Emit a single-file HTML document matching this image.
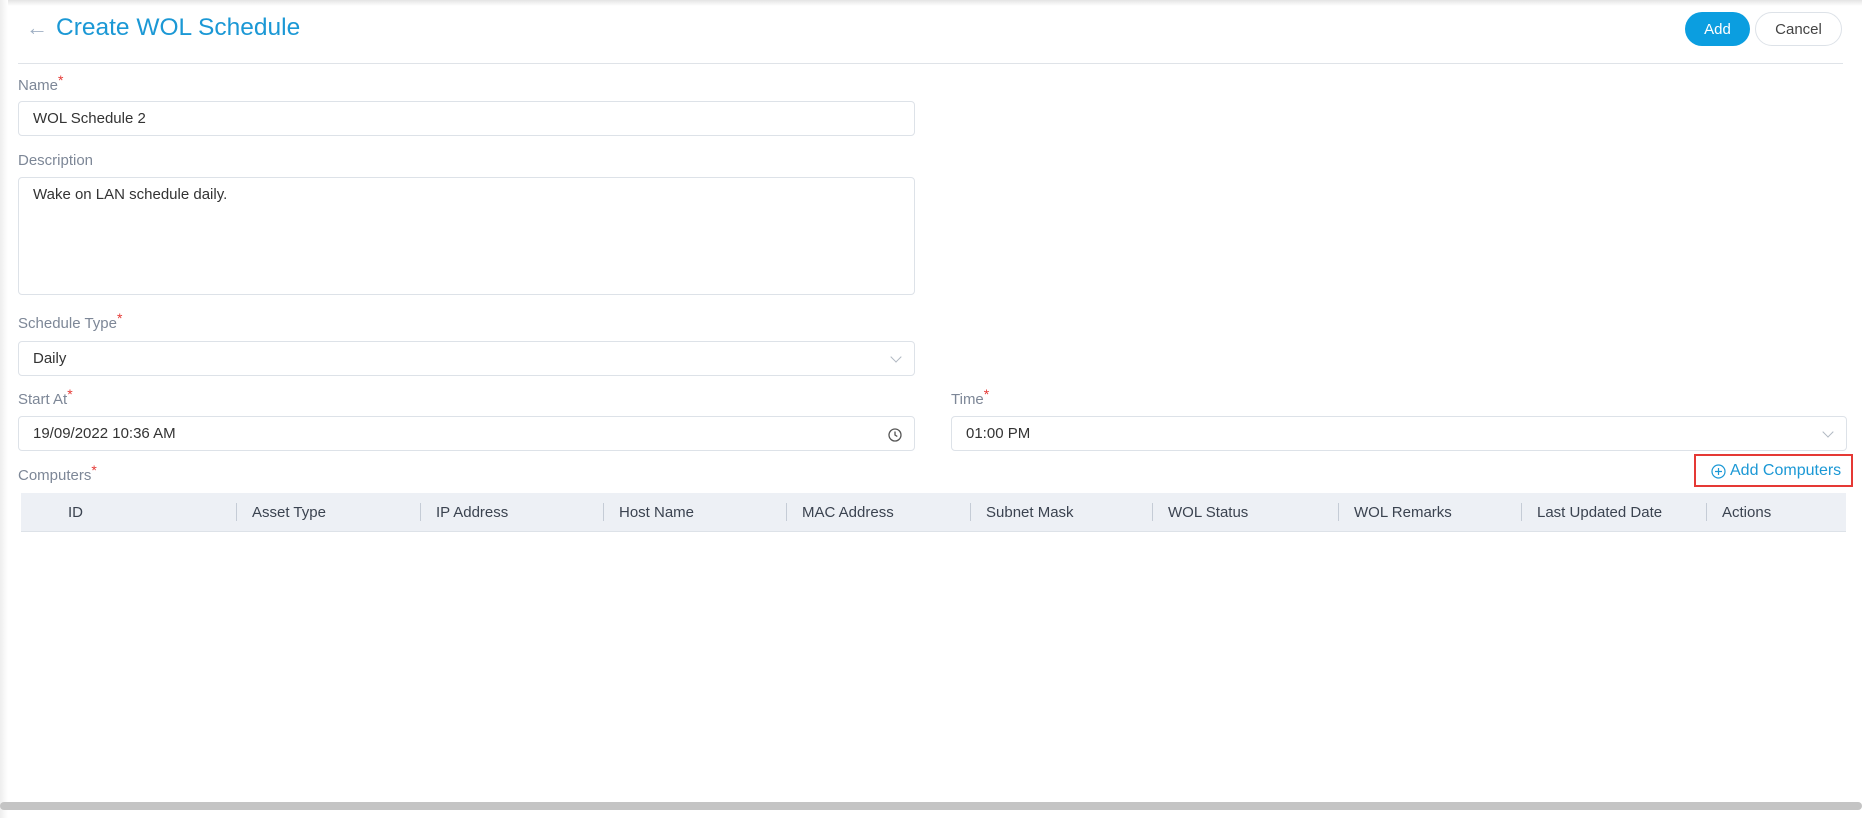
<!DOCTYPE html>
<html><head><meta charset="utf-8"><style>
*{box-sizing:border-box;margin:0;padding:0}
body{width:1862px;height:818px;overflow:hidden;background:#fff;font-family:"Liberation Sans",sans-serif;position:relative}
.shadowtop{position:absolute;left:0;top:0;width:1862px;height:6px;background:linear-gradient(#e4e4e4,#fff)}
.shadowleft{position:absolute;left:0;top:0;width:8px;height:818px;background:linear-gradient(90deg,#eeeeee,#fff)}
.abs{position:absolute}
.title{left:26px;top:14px;font-size:24.5px;color:#1b98d5;white-space:nowrap}
.title span{color:#9fb0c4;font-size:22px;margin-right:8px}
.btn{top:12px;height:34px;border-radius:17px;font-size:15px;display:flex;align-items:center;justify-content:center}
.divider{left:18px;top:63px;width:1825px;height:1px;background:#dfe3e8}
.lbl{font-size:15px;color:#7d8797}
.lbl b{color:#e53935;font-weight:normal;position:relative;top:-5px;font-size:14px}
.inp{border:1px solid #dde2e8;border-radius:4px;font-size:15px;color:#333;padding-left:14px;display:flex;align-items:center}
.ta{align-items:flex-start;padding-top:8px}
.chev{position:absolute;right:14px;top:11px;width:8px;height:8px;border-right:1px solid #b0b8c2;border-bottom:1px solid #b0b8c2;transform:rotate(45deg)}
.th{top:493px;left:21px;width:1825px;height:39px;background:#edf0f5;border-bottom:1px solid #dde2e8}
.col{position:absolute;top:0;height:39px;display:flex;align-items:center;font-size:15px;color:#3b4350}
.sep{position:absolute;top:10px;width:1px;height:18px;background:#c5ccd6}
</style></head><body>
<div class="shadowtop"></div><div class="shadowleft"></div>
<div class="abs title"><span>&#8592;</span>Create WOL Schedule</div>
<div class="abs btn" style="left:1685px;width:65px;background:#0b9ee0;color:#fff">Add</div>
<div class="abs btn" style="left:1755px;width:87px;border:1px solid #dde2e8;color:#444">Cancel</div>
<div class="abs divider"></div>

<div class="abs lbl" style="left:18px;top:77px">Name<b>*</b></div>
<div class="abs inp" style="left:18px;top:101px;width:897px;height:35px">WOL Schedule 2</div>
<div class="abs lbl" style="left:18px;top:152px">Description</div>
<div class="abs inp ta" style="left:18px;top:177px;width:897px;height:118px">Wake on LAN schedule daily.</div>
<div class="abs lbl" style="left:18px;top:315px">Schedule Type<b>*</b></div>
<div class="abs inp" style="left:18px;top:341px;width:897px;height:35px">Daily<div class="chev"></div></div>
<div class="abs lbl" style="left:18px;top:391px">Start At<b>*</b></div>
<div class="abs inp" style="left:18px;top:416px;width:897px;height:35px">19/09/2022 10:36 AM
<svg style="position:absolute;right:12px;top:11px" width="14" height="14" viewBox="0 0 14 14"><circle cx="7" cy="7" r="6" fill="none" stroke="#555" stroke-width="1.3"/><path d="M7 3.5V7l2.3 1.5" fill="none" stroke="#555" stroke-width="1.3"/></svg></div>
<div class="abs lbl" style="left:951px;top:391px">Time<b>*</b></div>
<div class="abs inp" style="left:951px;top:416px;width:896px;height:35px">01:00 PM<div class="chev"></div></div>
<div class="abs lbl" style="left:18px;top:467px">Computers<b>*</b></div>
<div class="abs" style="left:1694px;top:454px;width:159px;height:33px;border:2px solid #e53935"></div>
<div class="abs" style="left:1711px;top:462px;font-size:16px;color:#1b98d5;display:flex;align-items:center;white-space:nowrap">
<svg width="15" height="15" viewBox="0 0 15 15" style="margin-right:4px"><circle cx="7.5" cy="7.5" r="6.5" fill="none" stroke="#1b98d5" stroke-width="1.2"/><path d="M7.5 4v7M4 7.5h7" stroke="#1b98d5" stroke-width="1.2"/></svg>Add Computers</div>

<div class="abs th">
<div class="col" style="left:47px">ID</div>
<div class="sep" style="left:215px"></div><div class="col" style="left:231px">Asset Type</div>
<div class="sep" style="left:399px"></div><div class="col" style="left:415px">IP Address</div>
<div class="sep" style="left:582px"></div><div class="col" style="left:598px">Host Name</div>
<div class="sep" style="left:765px"></div><div class="col" style="left:781px">MAC Address</div>
<div class="sep" style="left:949px"></div><div class="col" style="left:965px">Subnet Mask</div>
<div class="sep" style="left:1131px"></div><div class="col" style="left:1147px">WOL Status</div>
<div class="sep" style="left:1317px"></div><div class="col" style="left:1333px">WOL Remarks</div>
<div class="sep" style="left:1500px"></div><div class="col" style="left:1516px">Last Updated Date</div>
<div class="sep" style="left:1685px"></div><div class="col" style="left:1701px">Actions</div>
</div>
<div class="abs" style="left:0;top:802px;width:1862px;height:8px;background:#c4c4c4;border-radius:4px"></div>
</body></html>
